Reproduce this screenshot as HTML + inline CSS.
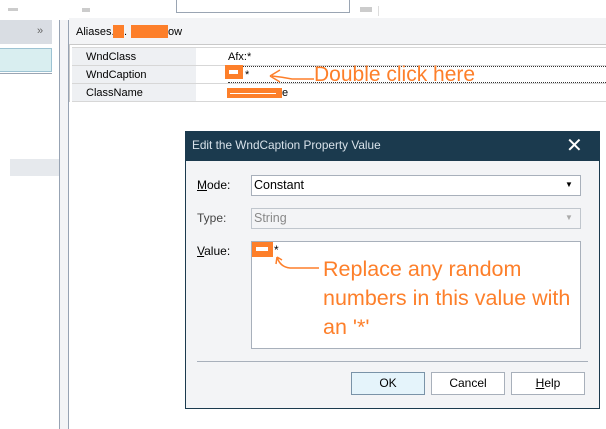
<!DOCTYPE html>
<html><head><style>
body{margin:0;width:606px;height:409px;position:relative;overflow:hidden;background:#fff;font-family:"Liberation Sans",sans-serif;font-size:12px;color:#000}
div{position:absolute;box-sizing:border-box}
.o{background:#fd7f2a}
.ann{color:#fd7f2a;font-size:21px;white-space:nowrap}
.g{font-size:11px}
</style></head><body>
<div style="left:0;top:0;width:606px;height:18px;background:#fff"></div>
<div style="left:8px;top:8px;width:10px;height:3px;background:#ccc"></div>
<div style="left:82px;top:8px;width:8px;height:4px;background:#ccc"></div>
<div style="left:176px;top:0;width:174px;height:13px;border:1px solid #9aa5b3;border-top:none"></div>
<div style="left:360px;top:7px;width:12px;height:5px;background:#ccc"></div>
<div style="left:378px;top:6px;width:1px;height:10px;background:#ddd"></div>
<!-- left panel -->
<div style="left:0;top:20px;width:52px;height:24px;background:#d9dde3"></div>
<div style="left:37px;top:25px;color:#666;font-size:11px">»</div>
<div style="left:0;top:48px;width:52px;height:24px;background:#d9eef0;border:1px solid #9dc3d3;border-left:none"></div>
<div style="left:0;top:73px;width:52px;height:1px;background:#9aa5b3"></div>
<div style="left:10px;top:159px;width:49px;height:17px;background:#e6e9ed"></div>
<div style="left:59px;top:0;width:10px;height:409px;background:#f3f4f6;border-left:1px solid #97a3b3;border-right:1px solid #97a3b3;top:20px"></div>
<!-- header -->
<div style="left:69px;top:18px;width:537px;height:26px;background:#f3f4f6"></div>
<div class="g" style="left:76px;top:26px">Aliases.</div>
<div class="o" style="left:113px;top:25px;width:11px;height:13px"></div>
<div class="g" style="left:124px;top:26px">.</div>
<div class="o" style="left:131px;top:25px;width:37px;height:13px"></div>
<div class="g" style="left:168px;top:26px">ow</div>
<!-- grid -->
<div style="left:69px;top:44px;width:537px;height:58px;border-top:1px solid #c9c9c9;border-left:1px solid #c9c9c9"></div>
<div style="left:72px;top:47px;width:124px;height:55px;background:#eef0f3"></div>
<div style="left:72px;top:65px;width:534px;height:1px;background:#d7d7d7"></div>
<div style="left:72px;top:83px;width:534px;height:1px;background:#d7d7d7"></div>
<div style="left:72px;top:101px;width:534px;height:1px;background:#d7d7d7"></div>
<div style="left:72px;top:47px;width:534px;height:1px;background:#d7d7d7"></div>
<div class="g" style="left:86px;top:51px">WndClass</div>
<div class="g" style="left:86px;top:69px">WndCaption</div>
<div class="g" style="left:86px;top:87px">ClassName</div>
<div class="g" style="left:228px;top:51px">Afx:*</div>
<div style="left:228px;top:66px;width:378px;height:17px;border-top:1px dotted #333;border-bottom:1px dotted #333"></div>
<div class="o" style="left:225px;top:65px;width:18px;height:14px"><div style="left:4px;top:5px;width:9px;height:4px;background:#fff"></div></div>
<div class="g" style="left:245px;top:69px">*</div>
<div class="o" style="left:227px;top:88px;width:55px;height:10px"><div style="left:3px;top:5px;width:46px;height:1px;background:#fff"></div></div>
<div class="g" style="left:282px;top:87px">e</div>
<svg style="position:absolute;left:268px;top:66px" width="50" height="20"><path d="M2 10 L12 4 M2 10 L12 16 M4 10 Q14 11 24 13 L46 13" stroke="#fd7f2a" stroke-width="1.5" fill="none"/></svg>
<div class="ann" style="left:314px;top:63px">Double click here</div>
<!-- dialog -->
<div style="left:185px;top:131px;width:415px;height:278px;background:#f3f4f6;border:1px solid #1b3a4e"></div>
<div style="left:185px;top:131px;width:415px;height:30px;background:#1b3a4e"></div>
<div style="left:192px;top:138px;color:#d8e2ea;font-size:11.8px">Edit the WndCaption Property Value</div>
<div style="left:566px;top:133px;color:#fff;font-size:20px">✕</div>
<div style="left:197px;top:178px"><u>M</u>ode:</div>
<div style="left:197px;top:211px;color:#444">Type:</div>
<div style="left:197px;top:244px"><u>V</u>alue:</div>
<div style="left:251px;top:175px;width:330px;height:21px;background:#fff;border:1px solid #a8b0bb"></div>
<div style="left:254px;top:178px;font-size:12.5px">Constant</div>
<div style="left:565px;top:180px;font-size:8px">▼</div>
<div style="left:251px;top:208px;width:330px;height:21px;background:#f3f4f6;border:1px solid #c0c6cd"></div>
<div style="left:254px;top:211px;color:#888;font-size:12.5px">String</div>
<div style="left:565px;top:213px;font-size:8px;color:#aaa">▼</div>
<div style="left:251px;top:241px;width:330px;height:108px;background:#fff;border:1px solid #a8b0bb"></div>
<div class="o" style="left:252px;top:242px;width:21px;height:15px"><div style="left:4px;top:5px;width:12px;height:4px;background:#fff"></div></div>
<div style="left:274px;top:243px">*</div>
<svg style="position:absolute;left:274px;top:255px" width="50" height="20"><path d="M3 2 Q6 12 16 13 L45 13 M3 2 L2 9 M3 2 L8 5" stroke="#fd7f2a" stroke-width="1.5" fill="none"/></svg>
<div class="ann" style="left:323px;top:255px;line-height:29px;font-size:21.5px">Replace any random<br>numbers in this value with<br>an '*'</div>
<div style="left:197px;top:361px;width:391px;height:1px;background:#a8b0bb"></div>
<div style="left:351px;top:372px;width:74px;height:23px;background:#e5f4fb;border:1px solid #7a93a8;text-align:center;line-height:21px">OK</div>
<div style="left:431px;top:372px;width:74px;height:23px;background:#fff;border:1px solid #a8b0bb;text-align:center;line-height:21px">Cancel</div>
<div style="left:511px;top:372px;width:74px;height:23px;background:#fff;border:1px solid #a8b0bb;text-align:center;line-height:21px"><u>H</u>elp</div>
</body></html>
